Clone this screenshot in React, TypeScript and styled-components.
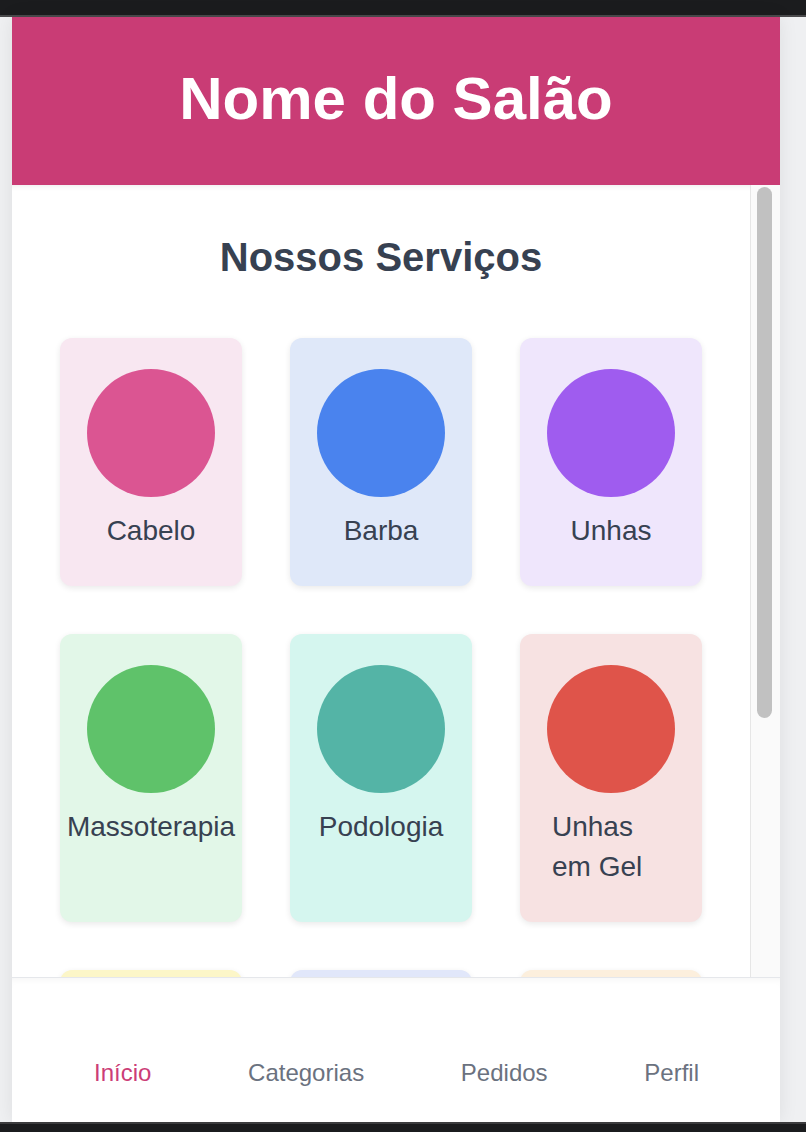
import React from "react";
import styled, { createGlobalStyle } from "styled-components";

const GlobalStyle = createGlobalStyle`
  html, body {
    margin: 0;
    padding: 0;
    background: #eff0f2;
    font-family: "Liberation Sans", Arial, Helvetica, sans-serif;
  }
  * { box-sizing: border-box; }
`;

const Page = styled.div`
  display: flex;
  flex-direction: column;
  height: 1132px;
  overflow: hidden;
`;

const TopBar = styled.div`
  flex: 0 0 17px;
  background: #1b1c1e;
  border-bottom: 2px solid #4a4a4c;
`;

const BottomBar = styled.div`
  flex: 0 0 10px;
  background: #1b1c1e;
  border-top: 2px solid #3c3c3e;
`;

const Stage = styled.div`
  flex: 1;
  min-height: 0;
  display: flex;
  padding-left: 12px;
`;

const Phone = styled.div`
  width: 768px;
  display: flex;
  flex-direction: column;
  background: #ffffff;
  box-shadow: 0 0 18px rgba(0, 0, 0, 0.08);
`;

const Header = styled.header`
  flex: 0 0 168px;
  background: #c93c75;
  display: flex;
  align-items: center;
  justify-content: center;
`;

const Brand = styled.h1`
  margin: 0;
  color: #ffffff;
  font-size: 60px;
  font-weight: 700;
  line-height: 1;
  padding-bottom: 4px;
`;

const Viewport = styled.div`
  flex: 1;
  min-height: 0;
  display: flex;
  background: #ffffff;
`;

const Content = styled.main`
  flex: 1;
  min-width: 0;
  overflow: hidden;
  box-shadow: inset 0 6px 6px -6px rgba(0, 0, 0, 0.1);
`;

const Track = styled.div`
  flex: 0 0 30px;
  display: flex;
  flex-direction: column;
  padding: 2px 8px 0 6px;
  background: #fafafa;
  border-left: 1px solid #e6e6e6;
`;

const Thumb = styled.div`
  height: 531px;
  background: #c1c1c1;
  border-radius: 8px;
`;

const Section = styled.section`
  padding: 48px 48px 142px;
`;

const SectionTitle = styled.h2`
  margin: 0 0 57px;
  text-align: center;
  font-size: 40px;
  line-height: 48px;
  font-weight: 700;
  color: #374151;
`;

const Grid = styled.div`
  display: grid;
  grid-template-columns: repeat(3, minmax(0, 1fr));
  gap: 48px;
`;

const Card = styled.div<{ $bg: string }>`
  display: flex;
  flex-direction: column;
  align-items: center;
  padding: 31px 32px 34px;
  background: ${(p) => p.$bg};
  border-radius: 12px;
  box-shadow: 0 2px 6px rgba(0, 0, 0, 0.09);
`;

const Dot = styled.div<{ $color: string }>`
  width: 128px;
  height: 128px;
  flex: 0 0 128px;
  border-radius: 50%;
  background: ${(p) => p.$color};
`;

const Label = styled.span`
  display: block;
  margin-top: 14px;
  font-size: 28px;
  line-height: 40.5px;
  color: #374151;
`;

const Nav = styled.nav`
  flex: 0 0 145px;
  display: flex;
  align-items: flex-start;
  justify-content: space-between;
  padding: 81px 81px 0 82px;
  background: #ffffff;
  border-top: 1px solid #e5e7eb;
  box-shadow: inset 0 6px 8px -6px rgba(0, 0, 0, 0.06);
`;

const NavItem = styled.a<{ $active?: boolean }>`
  font-size: 24px;
  line-height: 28px;
  color: ${(p) => (p.$active ? "#cc3d77" : "#6b7280")};
  text-decoration: none;
  cursor: pointer;
`;

const services = [
  { name: "Cabelo", bg: "#f8e7f1", color: "#db5592" },
  { name: "Barba", bg: "#dfe8f9", color: "#4a83ee" },
  { name: "Unhas", bg: "#efe6fc", color: "#9f5cef" },
  { name: "Massoterapia", bg: "#e2f7e8", color: "#5fc26a" },
  { name: "Podologia", bg: "#d5f6ef", color: "#54b4a6" },
  { name: "Unhas em Gel", bg: "#f7e2e2", color: "#df544a" },
  { name: "Sobrancelha", bg: "#fcf6c8", color: "#e5c431" },
  { name: "Maquiagem", bg: "#e1e7fa", color: "#6a7ee8" },
  { name: "Depilação", bg: "#fcefdd", color: "#ef9a3c" },
];

const navItems = ["Início", "Categorias", "Pedidos", "Perfil"];

export default function App() {
  return (
    <>
      <GlobalStyle />
      <Page>
        <TopBar />
        <Stage>
          <Phone>
            <Header>
              <Brand>Nome do Salão</Brand>
            </Header>
            <Viewport>
              <Content>
                <Section>
                  <SectionTitle>Nossos Serviços</SectionTitle>
                  <Grid>
                    {services.map((s) => (
                      <Card key={s.name} $bg={s.bg}>
                        <Dot $color={s.color} />
                        <Label>{s.name}</Label>
                      </Card>
                    ))}
                  </Grid>
                </Section>
              </Content>
              <Track>
                <Thumb />
              </Track>
            </Viewport>
            <Nav>
              {navItems.map((n, i) => (
                <NavItem key={n} $active={i === 0}>
                  {n}
                </NavItem>
              ))}
            </Nav>
          </Phone>
        </Stage>
        <BottomBar />
      </Page>
    </>
  );
}
